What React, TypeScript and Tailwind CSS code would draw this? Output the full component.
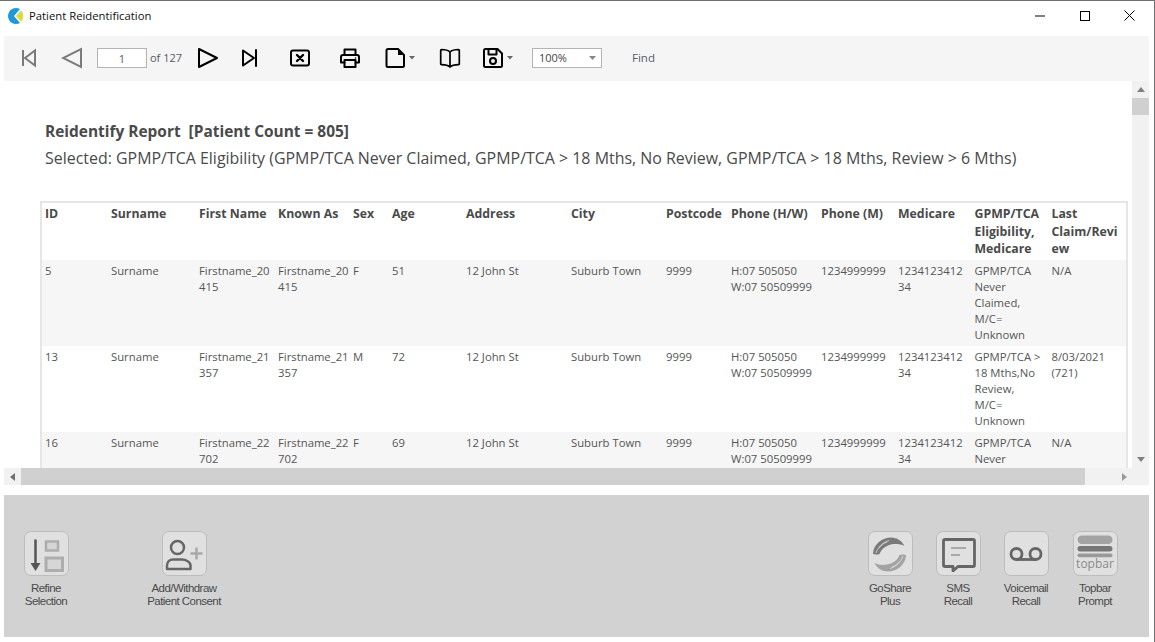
import React from "react";

const seg = { fontFamily: '"Open Sans","Noto Sans",sans-serif' };

const colsClass = "grid grid-cols-[66px_88px_79px_75px_39px_74px_105px_95px_65px_90px_77px_76.5px_77px_64px]";

function Cell({ children, className = "" }: { children?: React.ReactNode; className?: string }) {
  return <div className={"pl-[3px] min-w-0 " + className}>{children}</div>;
}

function Row({ r, bg }: { r: string[]; bg: string }) {
  return (
    <div className={colsClass + " h-[86px] pt-[3px] text-[11.3px] leading-[16px] text-[#555] " + bg}>
      {r.map((c, i) => (
        <Cell key={i}>{c.split("\n").map((l, j) => <div key={j} className="whitespace-nowrap">{l}</div>)}</Cell>
      ))}
    </div>
  );
}

const head = ["ID", "Surname", "First Name", "Known As", "Sex", "Age", "Address", "City", "Postcode", "Phone (H/W)", "Phone (M)", "Medicare", "GPMP/TCA\nEligibility,\nMedicare", "Last\nClaim/Revi\new"];

const rows = [
  ["5", "Surname", "Firstname_20\n415", "Firstname_20\n415", "F", "51", "12 John St", "Suburb Town", "9999", "H:07 505050\nW:07 50509999", "1234999999", "1234123412\n34", "GPMP/TCA\nNever\nClaimed,\nM/C=\nUnknown", "N/A"],
  ["13", "Surname", "Firstname_21\n357", "Firstname_21\n357", "M", "72", "12 John St", "Suburb Town", "9999", "H:07 505050\nW:07 50509999", "1234999999", "1234123412\n34", "GPMP/TCA >\n18 Mths,No\nReview,\nM/C=\nUnknown", "8/03/2021\n(721)"],
  ["16", "Surname", "Firstname_22\n702", "Firstname_22\n702", "F", "69", "12 John St", "Suburb Town", "9999", "H:07 505050\nW:07 50509999", "1234999999", "1234123412\n34", "GPMP/TCA\nNever", "N/A"],
];

const Stroke = { fill: "none", stroke: "#000", strokeWidth: 2, strokeLinejoin: "round" as const, strokeLinecap: "round" as const };
const Gray = { fill: "none", stroke: "#7a7a7a", strokeWidth: 2, strokeLinejoin: "miter" as const };

function ToolBtn({ w, children }: { w: string; children: React.ReactNode }) {
  return <div className={"flex items-center justify-center shrink-0 " + w}>{children}</div>;
}

function Caret() {
  return <svg width="7" height="4" viewBox="0 0 7 4" className="ml-[3px]"><path d="M0 0h6L3 3.500z" fill="#666" /></svg>;
}

function Toolbar() {
  return (
    <div className="h-[45px] mx-[4px] mr-[5px] bg-[#f5f5f5] flex items-center pl-[14px] pb-[2px] text-[#555a6a]">
      <ToolBtn w="w-[21px]">
        <svg width="16" height="20" viewBox="0 0 16 20"><path d="M2 2v16" {...Gray} /><path d="M14 2.500v15L4 10z" {...Gray} /></svg>
      </ToolBtn>
      <ToolBtn w="w-[22px] ml-[22px]">
        <svg width="22" height="22" viewBox="0 0 22 22"><path d="M20 2v18L2 11z" {...Gray} /></svg>
      </ToolBtn>
      <div className="ml-[14px] w-[50px] h-[20px] border border-[#b4b4b4] bg-white text-center text-[11px] leading-[19px]" style={seg}>1</div>
      <div className="ml-[3px] w-[36px] text-[11px] pt-[1px] whitespace-nowrap" style={seg}>of 127</div>
      <ToolBtn w="w-[22px] ml-[11px]">
        <svg width="22" height="22" viewBox="0 0 22 22"><path d="M2 2v18l18-9z" {...Stroke} /></svg>
      </ToolBtn>
      <ToolBtn w="w-[18px] ml-[22px]">
        <svg width="18" height="20" viewBox="0 0 18 20"><path d="M2 2.500v15L13 10z" {...Stroke} /><path d="M15 2v16" {...Stroke} /></svg>
      </ToolBtn>
      <ToolBtn w="w-[22px] ml-[30px]">
        <svg width="22" height="20" viewBox="0 0 22 20"><rect x="2" y="2.500" width="18" height="15" rx="2" {...Stroke} /><path d="M8 7l6 6M14 7l-6 6" {...Stroke} strokeWidth={2.4} /></svg>
      </ToolBtn>
      <ToolBtn w="w-[22px] ml-[28px]">
        <svg width="22" height="22" viewBox="0 0 22 22"><path d="M5.500 8V2.500h11V8M5.500 15.500H2V10a2 2 0 0 1 2-2h14a2 2 0 0 1 2 2v5.500h-3.500" {...Stroke} /><rect x="5.500" y="13" width="11" height="7" {...Stroke} /><circle cx="16.500" cy="11" r="0.800" fill="#000" /></svg>
      </ToolBtn>
      <div className="flex items-center shrink-0 ml-[23px] w-[33px]">
        <svg width="22" height="22" viewBox="0 0 22 22"><path d="M2.500 3.500a1.500 1.500 0 0 1 1.500-1.500h10l6 6v10.500a1.500 1.500 0 0 1-1.500 1.500H4a1.500 1.500 0 0 1-1.500-1.500z" {...Stroke} /><path d="M14 2v6h6z" fill="#000" /></svg>
        <Caret />
      </div>
      <ToolBtn w="w-[22px] ml-[22px]">
        <svg width="22" height="22" viewBox="0 0 22 22"><path d="M11 5c-2-2-5-2.500-8.500-2.500a.8.800 0 0 0-.8.800v13.500a.8.800 0 0 0 .8.800C6 17.600 9 18 11 20c2-2 5-2.400 8.500-2.400a.8.800 0 0 0 .8-.8V3.300a.8.800 0 0 0-.8-.8C16 2.500 13 3 11 5zM11 5v15" {...Stroke} strokeWidth={1.7} /></svg>
      </ToolBtn>
      <div className="flex items-center shrink-0 ml-[21px] w-[32px]">
        <svg width="22" height="22" viewBox="0 0 22 22"><path d="M2 3.500a1.500 1.500 0 0 1 1.500-1.500h12L20 6.500v12a1.500 1.500 0 0 1-1.500 1.500h-15A1.500 1.500 0 0 1 2 18.500z" {...Stroke} /><path d="M6.500 2.500v5h8v-5" {...Stroke} /><circle cx="11" cy="14" r="3" {...Stroke} /></svg>
        <Caret />
      </div>
      <div className="ml-[18px] w-[70px] h-[20px] border border-[#b4b4b4] bg-white flex items-center justify-between pl-[6px] pr-[5px] text-[11px] text-[#444]" style={seg}>
        <span className="pt-[1px]">100%</span>
        <svg width="7" height="4" viewBox="0 0 7 4"><path d="M0 0h7L3.500 4z" fill="#888" /></svg>
      </div>
      <div className="ml-[30px] text-[11.5px]" style={seg}>Find</div>
    </div>
  );
}

function Tile({ children }: { children: React.ReactNode }) {
  return <div className="w-[45px] h-[45px] rounded-[7px] border border-[#bdbdbd] bg-[#e0e0e0] flex items-center justify-center">{children}</div>;
}

function Action({ a, b, children, w, className = "" }: { a: string; b: string; children: React.ReactNode; w: string; className?: string }) {
  return (
    <div className={"flex flex-col items-center shrink-0 " + w + " " + className}>
      <Tile>{children}</Tile>
      <div className="mt-[6px] text-center text-[11.5px] leading-[13px] tracking-[-0.55px] text-[#4a4a4a] whitespace-nowrap" style={{ fontFamily: '"Liberation Sans",Arial,sans-serif' }}>
        <div>{a}</div>
        <div>{b}</div>
      </div>
    </div>
  );
}

function Hand({ fill, rotate }: { fill: string; rotate?: boolean }) {
  return (
    <g transform={rotate ? "rotate(180 18.500 19.500)" : undefined}>
      <path d="M2 18C3 9 11 2.500 20 2.500c6 0 11 3.500 13.500 8.500-5-2.500-11.500-2.500-16.500-.5-4 1.500-7 4.500-8.500 8.500-2.500 1-5.500.5-6.500-.5z" fill={fill} />
      <path d="M5 18C7 12 12 7.500 18 5.500M8 13C10 10 13 8 16 7" fill="none" stroke="#e0e0e0" strokeWidth=".8" />
    </g>
  );
}

function Panel() {
  return (
    <div className="h-[142px] mx-[4px] mr-[5px] mt-[10px] bg-[#d2d2d2] flex pt-[36px]">
      <Action a="Refine" b="Selection" w="w-[84px]">
        <svg width="40" height="40" viewBox="0 0 40 40">
          <path d="M9.500 5.500V30" stroke="#555" strokeWidth="2.500" fill="none" />
          <path d="M4.500 29h10l-5 8z" fill="#555" />
          <rect x="20" y="7.500" width="12" height="9" fill="#d6d6d6" stroke="#adadad" strokeWidth="2.500" />
          <rect x="20" y="24" width="16.500" height="12.500" fill="#d6d6d6" stroke="#adadad" strokeWidth="3" />
        </svg>
      </Action>
      <Action a="Add/Withdraw" b="Patient Consent" w="w-[100px]" className="ml-[46px]">
        <svg width="40" height="40" viewBox="0 0 40 40">
          <circle cx="13.500" cy="13.500" r="6.500" fill="none" stroke="#666" strokeWidth="2.500" />
          <path d="M3 35v-3.500c0-4 3-6 6-6h9c3 0 8.500 2 8.500 6V35z" fill="none" stroke="#666" strokeWidth="2.500" strokeLinejoin="round" />
          <path d="M32.500 13.500v12M26.500 19.500h12" stroke="#a8a8a8" strokeWidth="2.500" fill="none" />
        </svg>
      </Action>
      <div className="ml-auto flex pr-[19px]">
        <Action a="GoShare" b="Plus" w="w-[68px]">
          <svg width="38" height="38" viewBox="0 0 38 38">
            <Hand fill="#7a7a7a" />
            <Hand fill="#a3a3a3" rotate />
          </svg>
        </Action>
        <Action a="SMS" b="Recall" w="w-[68px]">
          <svg width="36" height="36" viewBox="0 0 36 36">
            <path d="M3.500 5a1.500 1.500 0 0 1 1.500-1.500h28A1.500 1.500 0 0 1 34.500 5v24a1.500 1.500 0 0 1-1.500 1.500H18l-5 4.500v-4.500H5A1.500 1.500 0 0 1 3.500 29z" fill="none" stroke="#666" strokeWidth="2.800" strokeLinejoin="round" />
            <path d="M11 12h15" stroke="#a3a3a3" strokeWidth="1.800" />
            <path d="M11 19h9" stroke="#a3a3a3" strokeWidth="1.800" />
          </svg>
        </Action>
        <Action a="Voicemail" b="Recall" w="w-[68px]">
          <svg width="36" height="22" viewBox="0 0 36 22">
            <circle cx="8.500" cy="11" r="5.500" fill="none" stroke="#666" strokeWidth="2.800" />
            <circle cx="27.500" cy="11" r="5.500" fill="none" stroke="#666" strokeWidth="2.800" />
            <path d="M8.500 16.500h19" stroke="#666" strokeWidth="2.800" />
          </svg>
        </Action>
        <Action a="Topbar" b="Prompt" w="w-[70px]">
          <svg width="38" height="38" viewBox="0 0 38 38">
            <rect x="1.500" y="0.500" width="35" height="8.500" rx="4.200" fill="#a3a3a3" />
            <rect x="1.500" y="11" width="35" height="5.500" rx="2.700" fill="#777" />
            <rect x="1.500" y="18.500" width="35" height="3.700" rx="1.800" fill="#999" />
            <text x="19" y="32.500" textAnchor="middle" fontSize="12" fontFamily='"Open Sans",sans-serif' fill="#8a8a8a">topbar</text>
          </svg>
        </Action>
      </div>
    </div>
  );
}

function Report() {
  return (
    <div className="relative h-[404px] mx-[4px] mr-[5px] overflow-hidden bg-white" style={seg}>
      <div className="flex h-[387px]">
        <div className="flex-1 min-w-0 overflow-hidden">
          <div className="pl-[41px] pt-[40px] text-[#4a4a4a]">
            <div className="text-[15.45px] leading-[20px] font-bold whitespace-nowrap">Reidentify Report&nbsp; [Patient Count = 805]</div>
            <div className="mt-[7px] text-[15.95px] leading-[20px] whitespace-nowrap">Selected: GPMP/TCA Eligibility (GPMP/TCA Never Claimed, GPMP/TCA &gt; 18 Mths, No Review, GPMP/TCA &gt; 18 Mths, Review &gt; 6 Mths)</div>
          </div>
          <div className="ml-[36px] mr-[4px] mt-[33px] border-2 border-b-0 border-[#e6e6e6]">
            <div className={colsClass + " h-[57px] pt-[2px] text-[12.3px] leading-[17.500px] font-bold text-[#4a4a4a]"}>
              {head.map((c, i) => (
                <Cell key={i}>{c.split("\n").map((l, j) => <div key={j} className="whitespace-nowrap">{l}</div>)}</Cell>
              ))}
            </div>
            <Row r={rows[0]} bg="bg-[#f6f6f6]" />
            <Row r={rows[1]} bg="bg-white" />
            <Row r={rows[2]} bg="bg-[#f6f6f6]" />
          </div>
        </div>
        <div className="w-[17px] bg-[#f1f1f1] flex flex-col items-center shrink-0">
          <div className="h-[17px] w-full bg-[#f1f1f1] flex items-center justify-center">
            <svg width="8" height="5" viewBox="0 0 8 5"><path d="M4 0l4 5H0z" fill="#808080" /></svg>
          </div>
          <div className="h-[17px] w-full bg-[#d0d0d0]" />
          <div className="flex-1" />
          <div className="h-[17px] w-full flex items-center justify-center">
            <svg width="8" height="5" viewBox="0 0 8 5"><path d="M4 5l4-5H0z" fill="#808080" /></svg>
          </div>
        </div>
      </div>
      <div className="h-[17px] flex bg-[#f1f1f1]">
        <div className="w-[17px] flex items-center justify-center">
          <svg width="5" height="8" viewBox="0 0 5 8"><path d="M0 4l5-4v8z" fill="#707070" /></svg>
        </div>
        <div className="w-[1064px] bg-[#d0d0d0]" />
        <div className="flex-1 flex items-center justify-end pr-[22px]">
          <svg width="5" height="8" viewBox="0 0 5 8"><path d="M5 4L0 0v8z" fill="#9a9a9a" /></svg>
        </div>
      </div>
    </div>
  );
}

export default function App() {
  return (
    <div className="w-[1155px] h-[642px] bg-white overflow-hidden relative border-t border-t-[#707070] border-r border-r-[#707070]" style={seg}>
      <div className="h-[35px] flex items-center pl-[8px] pb-[6px]">
        <svg width="16" height="16" viewBox="0 0 16 16">
          <path d="M12 1.070A8 8 0 1 0 12 14.930L6 8z" fill="#1f9ad6" />
          <path d="M8 8l5.200-5.400A8 8 0 0 1 13.200 13.400z" fill="#d8dc3c" />
        </svg>
        <div className="ml-[5px] pt-[1px] text-[11.300px] text-[#111]">Patient Reidentification</div>
        <div className="ml-auto flex items-center">
          <svg width="10" height="2" viewBox="0 0 10 2" className="mr-[35px]"><path d="M0 1h10" stroke="#000" /></svg>
          <svg width="10" height="10" viewBox="0 0 10 10" className="mr-[34px]"><rect x=".5" y=".5" width="9" height="9" fill="none" stroke="#000" /></svg>
          <svg width="11" height="11" viewBox="0 0 11 11" className="mr-[19px]"><path d="M.5.500l10 10M10.500.500l-10 10" stroke="#000" fill="none" /></svg>
        </div>
      </div>
      <Toolbar />
      <Report />
      <Panel />
    </div>
  );
}
